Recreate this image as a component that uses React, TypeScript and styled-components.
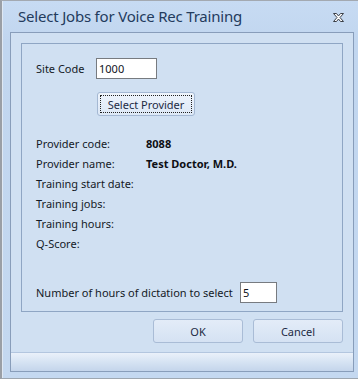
import styled, { createGlobalStyle } from "styled-components";

const GlobalStyle = createGlobalStyle`
  html, body {
    margin: 0;
    padding: 0;
    background: #c4d8f0;
  }
  * {
    box-sizing: border-box;
  }
`;

const uiFont = `"Noto Sans", "Open Sans", "DejaVu Sans", sans-serif`;

export default function App() {
  return (
    <>
      <GlobalStyle />
      <Window>
        <TitleBar>
          <Title>Select Jobs for Voice Rec Training</Title>
          <CloseIcon />
        </TitleBar>
        <Client>
          <Main>
            <GroupBox>
              <FieldRow>
                <FieldLabel width={60}>Site Code</FieldLabel>
                <TextBox width={61} defaultValue="1000" />
              </FieldRow>
              <ProviderButton>
                <FocusRect>Select Provider</FocusRect>
              </ProviderButton>
              <InfoList>
                <InfoRow>
                  <InfoLabel>Provider code:</InfoLabel>
                  <InfoValue>8088</InfoValue>
                </InfoRow>
                <InfoRow>
                  <InfoLabel>Provider name:</InfoLabel>
                  <InfoValue>Test Doctor, M.D.</InfoValue>
                </InfoRow>
                <InfoRow>
                  <InfoLabel>Training start date:</InfoLabel>
                </InfoRow>
                <InfoRow>
                  <InfoLabel>Training jobs:</InfoLabel>
                </InfoRow>
                <InfoRow>
                  <InfoLabel>Training hours:</InfoLabel>
                </InfoRow>
                <InfoRow>
                  <InfoLabel>Q-Score:</InfoLabel>
                </InfoRow>
              </InfoList>
              <HoursRow>
                <FieldLabel width={204}>Number of hours of dictation to select</FieldLabel>
                <TextBox width={37} defaultValue="5" />
              </HoursRow>
            </GroupBox>
            <ButtonBar>
              <DialogButton>OK</DialogButton>
              <DialogButton>Cancel</DialogButton>
            </ButtonBar>
          </Main>
          <StatusStrip />
        </Client>
      </Window>
    </>
  );
}

function CloseIcon() {
  return (
    <CloseWrap>
      <svg width="13" height="11" viewBox="0 0 13 11">
        <path
          d="M1.5 1.5 L4.5 1.5 L6.5 4 L8.5 1.5 L11.5 1.5 L8 5.5 L11.5 9.5 L8.5 9.5 L6.5 7 L4.5 9.5 L1.5 9.5 L5 5.5 Z"
          fill="#ffffff"
          stroke="#3a3f47"
          strokeWidth="1"
          strokeLinejoin="miter"
        />
      </svg>
    </CloseWrap>
  );
}

const Window = styled.div`
  width: 358px;
  height: 379px;
  display: flex;
  flex-direction: column;
  background: linear-gradient(#c7dbf3, #c1d6ef 40px, #c4d8f0);
  border-top: 1px solid #a3a9b1;
  border-bottom: 1px solid #9da6b0;
  border-left: 2px solid #9a9fa6;
  box-shadow: inset 1px 0 0 #dfe8f3;
  padding: 0 4px 6px 8px;
  font-family: ${uiFont};
`;

const TitleBar = styled.div`
  height: 31px;
  display: flex;
  align-items: center;
  justify-content: space-between;
  padding: 0 9px 2px 8px;
`;

const Title = styled.div`
  font-size: 15px;
  color: #233b5d;
  letter-spacing: -0.2px;
  white-space: nowrap;
`;

const CloseWrap = styled.div`
  display: flex;
  align-items: center;
  margin-top: 3px;
`;

const Client = styled.div`
  flex: 1;
  display: flex;
  flex-direction: column;
  border: 1px solid #889dba;
  background: #d0e0f2;
`;

const Main = styled.div`
  flex: 1;
  display: flex;
  flex-direction: column;
  padding: 10px 10px 0 10px;
`;

const GroupBox = styled.div`
  height: 269px;
  border: 1px solid #8fa6c4;
  display: flex;
  flex-direction: column;
  padding: 14px 14px 0 14px;
`;

const FieldRow = styled.div`
  display: flex;
  align-items: center;
`;

const HoursRow = styled(FieldRow)`
  margin-top: 29px;
`;

const FieldLabel = styled.span<{ width: number }>`
  width: ${(p) => p.width}px;
  font-size: 11px;
  color: #141a26;
  white-space: nowrap;
`;

const TextBox = styled.input<{ width: number }>`
  width: ${(p) => p.width}px;
  height: 21px;
  border: 1px solid #777b80;
  background: #ffffff;
  font-family: ${uiFont};
  font-size: 11px;
  color: #10131c;
  padding: 0 2px;
  margin: 0;
  outline: none;
`;

const ProviderButton = styled.button`
  width: 98px;
  height: 24px;
  margin: 13px 0 0 61px;
  padding: 2px;
  border: 1px solid #a4b8d3;
  border-radius: 3px;
  background: linear-gradient(#eef4fc, #dde8f6);
  font-family: ${uiFont};
  font-size: 11px;
  color: #1c2a44;
  display: flex;
`;

const FocusRect = styled.span`
  flex: 1;
  display: flex;
  align-items: center;
  justify-content: center;
  border: 1px dotted #222;
  white-space: nowrap;
`;

const InfoList = styled.div`
  display: flex;
  flex-direction: column;
  margin-top: 17px;
`;

const InfoRow = styled.div`
  height: 20px;
  display: flex;
  align-items: center;
`;

const InfoLabel = styled.span`
  width: 110px;
  font-size: 11px;
  color: #141a26;
  white-space: nowrap;
`;

const InfoValue = styled.span`
  font-size: 11px;
  font-weight: 700;
  color: #0d0f14;
  white-space: nowrap;
`;

const ButtonBar = styled.div`
  display: flex;
  justify-content: flex-end;
  gap: 10px;
  margin-top: 7px;
`;

const DialogButton = styled.button`
  width: 90px;
  height: 24px;
  border: 1px solid #a9bcd6;
  border-radius: 3px;
  background: linear-gradient(#e3ecf8, #d5e2f3);
  font-family: ${uiFont};
  font-size: 11px;
  color: #1c2a44;
  padding: 0;
`;

const StatusStrip = styled.div`
  height: 19px;
  border-top: 1px solid #b3c6df;
  background: linear-gradient(#eaf1fa, #d6e3f3 50%, #c4d5eb);
`;
